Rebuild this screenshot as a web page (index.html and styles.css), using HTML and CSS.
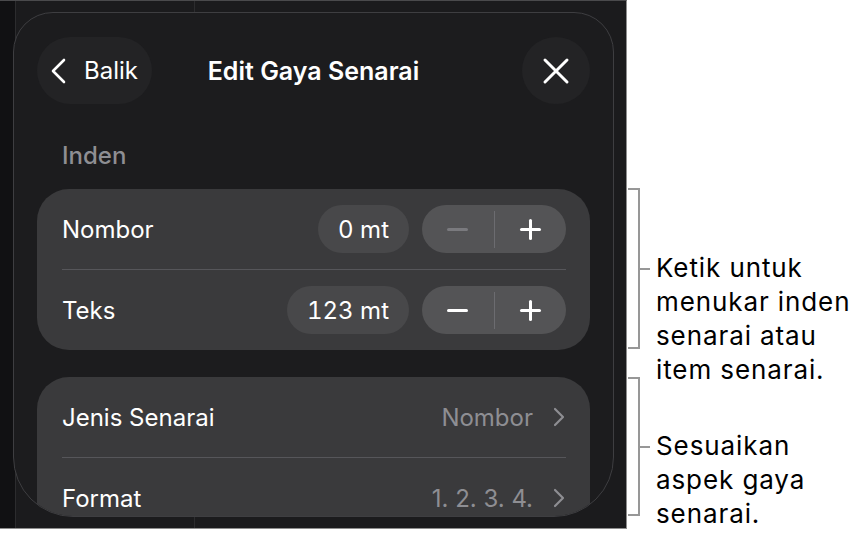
FILE: index.html
```html
<!DOCTYPE html>
<html lang="ms">
<head>
  <meta charset="UTF-8">
  <meta name="viewport" content="width=device-width, initial-scale=1.0">
  <title>Edit Gaya Senarai</title>
  <link rel="stylesheet" href="styles.css">
</head>
<body>
  <div class="figure">
    <div class="screen">
      <!-- app behind the sheet -->
      <div class="backdrop">
        <div class="strip"></div>
        <div class="pane"></div>
        <div class="pane wide"></div>
      </div>

      <div class="sheet">
        <div class="sheet-header">
          <button class="back-button">
            <svg width="16" height="26" viewBox="0 0 16 26">
              <path d="M14 2 L3 13 L14 24" fill="none" stroke="#fff" stroke-width="2.6" stroke-linecap="round" stroke-linejoin="round"/>
            </svg>
            <span>Balik</span>
          </button>
          <h1 class="sheet-title">Edit Gaya Senarai</h1>
          <button class="close-button">
            <svg width="28" height="28" viewBox="0 0 28 28">
              <path d="M3 3 L25 25 M25 3 L3 25" fill="none" stroke="#fff" stroke-width="3" stroke-linecap="round"/>
            </svg>
          </button>
        </div>

        <div class="section-label">Inden</div>
        <div class="card">
          <div class="row">
            <span class="row-label">Nombor</span>
            <div class="controls">
              <span class="value-pill">0 mt</span>
              <div class="stepper">
                <span class="step disabled"><i class="minus"></i></span>
                <span class="step"><i class="plus"></i></span>
              </div>
            </div>
          </div>
          <div class="divider"></div>
          <div class="row">
            <span class="row-label">Teks</span>
            <div class="controls">
              <span class="value-pill">123 mt</span>
              <div class="stepper">
                <span class="step"><i class="minus"></i></span>
                <span class="step"><i class="plus"></i></span>
              </div>
            </div>
          </div>
        </div>

        <div class="card list-card">
          <div class="row">
            <span class="row-label">Jenis Senarai</span>
            <span class="row-value">Nombor
              <svg class="chevron" width="14" height="22" viewBox="0 0 14 22">
                <path d="M3 3 L11 11 L3 19" fill="none" stroke="#8e8e93" stroke-width="2.2" stroke-linecap="round" stroke-linejoin="round"/>
              </svg>
            </span>
          </div>
          <div class="divider"></div>
          <div class="row">
            <span class="row-label">Format</span>
            <span class="row-value">1. 2. 3. 4.
              <svg class="chevron" width="14" height="22" viewBox="0 0 14 22">
                <path d="M3 3 L11 11 L3 19" fill="none" stroke="#8e8e93" stroke-width="2.2" stroke-linecap="round" stroke-linejoin="round"/>
              </svg>
            </span>
          </div>
        </div>
      </div>
    </div>

    <div class="notes">
      <div class="callout first">
        <div class="bracket"></div>
        <p class="note">Ketik untuk<br>menukar inden<br>senarai atau<br>item senarai.</p>
      </div>
      <div class="callout second">
        <div class="bracket"></div>
        <p class="note">Sesuaikan<br>aspek gaya<br>senarai.</p>
      </div>
    </div>
  </div>
</body>
</html>
```

FILE: styles.css
```css
body {
  margin: 0;
  background-color: #fff;
  font-family: Inter, "Liberation Sans", sans-serif;
}
.figure {
  display: flex;
  width: 859px;
  height: 535px;
}
.screen {
  position: relative;
  width: 627px;
  height: 529px;
  box-sizing: border-box;
  background-color: #1b1b1d;
  border-top: 1px solid #4a4a4c;
  border-right: 1px solid #8e8e8e;
  border-bottom: 1px solid #8e8e8e;
  overflow: hidden;
  flex-shrink: 0;
}
.backdrop {
  display: flex;
  height: 100%;
}
.strip {
  width: 15px;
  background-color: #111113;
  border-right: 1px solid #2c2c2e;
}
.pane {
  width: 178px;
  border-right: 1px solid #2c2c2e;
}
.pane.wide {
  flex: 1;
  border-right: none;
}
.sheet {
  position: absolute;
  left: 13px;
  top: 11px;
  width: 601px;
  height: 505px;
  box-sizing: border-box;
  padding: 24px 23px 0 23px;
  background-color: #1c1c1e;
  border: 1px solid #3e3e41;
  border-radius: 40px 40px 60px 60px;
  overflow: hidden;
}
.sheet-header {
  display: grid;
  grid-template-columns: 1fr auto 1fr;
  align-items: center;
  height: 67px;
}
button {
  border: none;
  color: #fff;
  font-family: inherit;
  cursor: pointer;
}
.back-button {
  justify-self: start;
  display: flex;
  align-items: center;
  gap: 18px;
  height: 67px;
  padding: 0 14px 0 13px;
  border-radius: 34px;
  background-color: #232325;
  font-size: 24px;
}
.sheet-title {
  margin: 0;
  color: #fff;
  font-size: 25px;
  font-weight: 600;
}
.close-button {
  justify-self: end;
  display: flex;
  align-items: center;
  justify-content: center;
  width: 68px;
  height: 67px;
  padding: 0;
  border-radius: 50%;
  background-color: #232325;
}
.section-label {
  margin: 37px 0 18px 25px;
  line-height: 30px;
  font-size: 24px;
  font-weight: 500;
  color: #8e8e93;
}
.card {
  background-color: #3a3a3c;
  border-radius: 32px;
}
.list-card {
  margin-top: 27px;
}
.row {
  display: flex;
  align-items: center;
  justify-content: space-between;
  height: 80px;
  padding: 0 24px 0 25px;
}
.row-label {
  color: #fff;
  font-size: 24px;
}
.divider {
  height: 1px;
  margin: 0 24px 0 25px;
  background-color: #56565a;
}
.controls {
  display: flex;
  gap: 13px;
}
.value-pill {
  display: flex;
  align-items: center;
  height: 48px;
  padding: 0 20px;
  border-radius: 24px;
  background-color: #48484a;
  color: #fff;
  font-size: 24px;
  font-variant-numeric: tabular-nums;
}
.stepper {
  display: flex;
  align-items: center;
  width: 144px;
  height: 48px;
  border-radius: 24px;
  background-color: #545456;
}
.step {
  flex: 1;
  display: flex;
  align-items: center;
  justify-content: center;
  height: 37px;
}
.step + .step {
  border-left: 1px solid #6c6c70;
}
.minus, .plus {
  position: relative;
  display: block;
  width: 21px;
  height: 21px;
}
.minus::before, .plus::before, .plus::after {
  content: "";
  position: absolute;
  background-color: #fff;
  border-radius: 2px;
}
.minus::before, .plus::before {
  left: 0;
  top: 9px;
  width: 21px;
  height: 3px;
}
.plus::after {
  left: 9px;
  top: 0;
  width: 3px;
  height: 21px;
}
.step.disabled .minus::before {
  background-color: #7a7a7e;
}
.row-value {
  display: flex;
  align-items: center;
  gap: 19px;
  color: #8e8e93;
  font-size: 24px;
}
.notes {
  margin-left: 1px;
  padding-top: 188px;
}
.callout {
  display: flex;
  align-items: flex-start;
}
.callout.first {
  height: 161px;
}
.callout.second {
  height: 139px;
  margin-top: 28px;
}
.bracket {
  position: relative;
  width: 12px;
  height: 100%;
  box-sizing: border-box;
  border: 2px solid #979797;
  border-left: none;
}
.bracket::after {
  content: "";
  position: absolute;
  left: 100%;
  top: calc(50% - 1px);
  width: 12px;
  height: 2px;
  background-color: #979797;
}
.note {
  margin: 0 0 0 16px;
  font-size: 26px;
  line-height: 34px;
  letter-spacing: 0.9px;
  color: #000;
  white-space: nowrap;
}
.first .note {
  margin-top: 63px;
}
.second .note {
  margin-top: 52px;
}
```
